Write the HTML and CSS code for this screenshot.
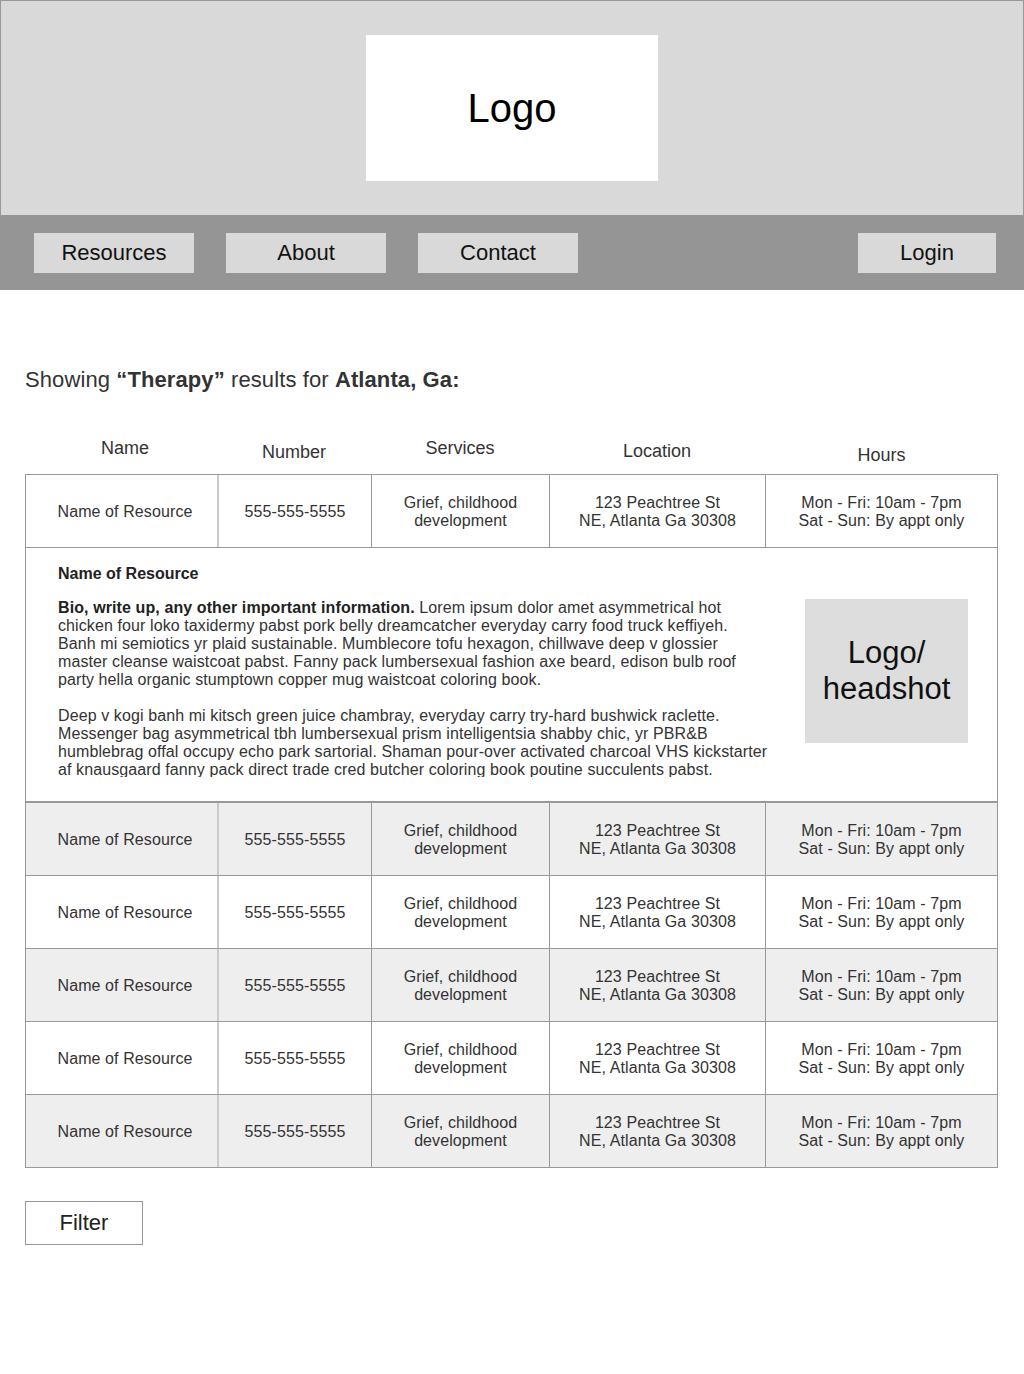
FILE: index.html
```html
<!DOCTYPE html>
<html lang="en">
<head>
<meta charset="utf-8">
<title>Resources</title>
<link rel="stylesheet" href="styles.css">
</head>
<body>
<header class="site-header">
  <div class="logo-box">Logo</div>
</header>
<nav class="site-nav">
  <a class="nav-btn">Resources</a>
  <a class="nav-btn">About</a>
  <a class="nav-btn">Contact</a>
  <a class="nav-btn nav-btn--login">Login</a>
</nav>
<main class="content">
  <h1 class="results-title">Showing <strong>“Therapy”</strong> results for <strong>Atlanta, Ga:</strong></h1>

  <div class="results-head">
    <div class="head-cell head-cell--a">Name</div>
    <div class="head-cell head-cell--b">Number</div>
    <div class="head-cell head-cell--a">Services</div>
    <div class="head-cell head-cell--c">Location</div>
    <div class="head-cell head-cell--d">Hours</div>
  </div>

  <div class="results">
    <div class="row">
      <div class="cell cell--name">Name of Resource</div>
      <div class="cell">555-555-5555</div>
      <div class="cell">Grief, childhood<br>development</div>
      <div class="cell">123 Peachtree St<br>NE, Atlanta Ga 30308</div>
      <div class="cell">Mon - Fri: 10am - 7pm<br>Sat - Sun: By appt only</div>
    </div>

    <div class="detail">
      <div class="detail-text">
        <h2 class="detail-title">Name of Resource</h2>
        <p class="detail-para"><strong>Bio, write up, any other important information.</strong> Lorem ipsum dolor amet asymmetrical hot<br>chicken four loko taxidermy pabst pork belly dreamcatcher everyday carry food truck keffiyeh.<br>Banh mi semiotics yr plaid sustainable. Mumblecore tofu hexagon, chillwave deep v glossier<br>master cleanse waistcoat pabst. Fanny pack lumbersexual fashion axe beard, edison bulb roof<br>party hella organic stumptown copper mug waistcoat coloring book.</p>
        <p class="detail-para">Deep v kogi banh mi kitsch green juice chambray, everyday carry try-hard bushwick raclette.<br>Messenger bag asymmetrical tbh lumbersexual prism intelligentsia shabby chic, yr PBR&amp;B<br>humblebrag offal occupy echo park sartorial. Shaman pour-over activated charcoal VHS kickstarter<br>af knausgaard fanny pack direct trade cred butcher coloring book poutine succulents pabst.</p>
      </div>
      <div class="detail-photo">Logo/<br>headshot</div>
    </div>

    <div class="row row--alt row--after-detail">
      <div class="cell cell--name">Name of Resource</div>
      <div class="cell">555-555-5555</div>
      <div class="cell">Grief, childhood<br>development</div>
      <div class="cell">123 Peachtree St<br>NE, Atlanta Ga 30308</div>
      <div class="cell">Mon - Fri: 10am - 7pm<br>Sat - Sun: By appt only</div>
    </div>
    <div class="row">
      <div class="cell cell--name">Name of Resource</div>
      <div class="cell">555-555-5555</div>
      <div class="cell">Grief, childhood<br>development</div>
      <div class="cell">123 Peachtree St<br>NE, Atlanta Ga 30308</div>
      <div class="cell">Mon - Fri: 10am - 7pm<br>Sat - Sun: By appt only</div>
    </div>
    <div class="row row--alt">
      <div class="cell cell--name">Name of Resource</div>
      <div class="cell">555-555-5555</div>
      <div class="cell">Grief, childhood<br>development</div>
      <div class="cell">123 Peachtree St<br>NE, Atlanta Ga 30308</div>
      <div class="cell">Mon - Fri: 10am - 7pm<br>Sat - Sun: By appt only</div>
    </div>
    <div class="row">
      <div class="cell cell--name">Name of Resource</div>
      <div class="cell">555-555-5555</div>
      <div class="cell">Grief, childhood<br>development</div>
      <div class="cell">123 Peachtree St<br>NE, Atlanta Ga 30308</div>
      <div class="cell">Mon - Fri: 10am - 7pm<br>Sat - Sun: By appt only</div>
    </div>
    <div class="row row--alt">
      <div class="cell cell--name">Name of Resource</div>
      <div class="cell">555-555-5555</div>
      <div class="cell">Grief, childhood<br>development</div>
      <div class="cell">123 Peachtree St<br>NE, Atlanta Ga 30308</div>
      <div class="cell">Mon - Fri: 10am - 7pm<br>Sat - Sun: By appt only</div>
    </div>
  </div>

  <button class="filter-btn" type="button">Filter</button>
</main>
</body>
</html>
```

FILE: styles.css
```css
* {
  box-sizing: border-box;
}

body {
  margin: 0;
  font-family: "Liberation Sans", Arial, Helvetica, sans-serif;
  color: #333;
  background: #fff;
}

/* Header */
.site-header {
  height: 215px;
  background: #d9d9d9;
  border: 1px solid #999;
  border-bottom: 0;
  display: flex;
  justify-content: center;
  padding-top: 34px;
}

.logo-box {
  width: 292px;
  height: 146px;
  background: #fff;
  display: flex;
  align-items: center;
  justify-content: center;
  font-size: 40px;
  color: #000;
}

/* Nav */
.site-nav {
  height: 75px;
  background: #959595;
  display: flex;
  align-items: center;
  gap: 32px;
  padding: 0 28px 0 34px;
}

.nav-btn {
  width: 160px;
  height: 40px;
  background: #d9d9d9;
  display: flex;
  align-items: center;
  justify-content: center;
  font-size: 22px;
  color: #111;
}

.nav-btn--login {
  width: 138px;
  margin-left: auto;
}

/* Content */
.content {
  padding: 0 26px 0 25px;
}

.results-title {
  margin: 77px 0 0;
  font-size: 22px;
  line-height: 26px;
  font-weight: normal;
  letter-spacing: 0.1px;
  color: #333;
}

.results-title strong {
  font-weight: bold;
}

.results-head {
  height: 81px;
  display: grid;
  grid-template-columns: 192px 154px 178px 216px 233px;
  align-items: end;
}

.head-cell {
  text-align: center;
  font-size: 18px;
  line-height: 20px;
  color: #333;
}

.head-cell:first-child {
  padding-left: 8px;
}

.head-cell--a { padding-bottom: 16px; }
.head-cell--b { padding-bottom: 12px; }
.head-cell--c { padding-bottom: 13px; }
.head-cell--d { padding-bottom: 9px; }

/* Table */
.results {
  width: 973px;
  border: 1px solid #999;
  border-top: 0;
}

.row {
  display: grid;
  grid-template-columns: 191px 154px 178px 216px 232px;
  height: 73px;
  border-top: 1px solid #999;
  background: #fff;
}

.row--alt {
  background: #eee;
}

.row--after-detail {
  height: 74px;
  border-top: 2px solid #999;
}

.cell {
  display: flex;
  align-items: center;
  justify-content: center;
  text-align: center;
  font-size: 16px;
  line-height: 18px;
  letter-spacing: 0.1px;
  color: #333;
  border-left: 1px solid #999;
  padding-top: 1px;
}

.cell--name {
  border-left: 0;
  padding-left: 7px;
}

.cell:nth-child(2) {
  border-left: 2px solid #cacaca;
}

/* Detail panel */
.detail {
  height: 254px;
  border-top: 1px solid #999;
  display: grid;
  grid-template-columns: 710px 163px;
  column-gap: 37px;
  align-items: center;
  padding: 17px 29px 24px 32px;
}

.detail-text {
  height: 212px;
  overflow: hidden;
}

.detail-title {
  margin: 0 0 16px;
  font-size: 16px;
  line-height: 18px;
  font-weight: bold;
  color: #222;
}

.detail-para {
  margin: 0 0 18px;
  font-size: 16px;
  line-height: 18px;
  letter-spacing: 0.1px;
  color: #333;
}

.detail-para strong {
  color: #222;
}

.detail-photo {
  width: 163px;
  height: 144px;
  background: #ddd;
  display: flex;
  align-items: center;
  justify-content: center;
  text-align: center;
  font-size: 31px;
  line-height: 36px;
  color: #111;
}

/* Filter */
.filter-btn {
  display: block;
  margin-top: 33px;
  width: 118px;
  height: 44px;
  border: 1px solid #999;
  background: #fff;
  font-family: inherit;
  font-size: 22px;
  color: #222;
  padding: 0;
}
```
